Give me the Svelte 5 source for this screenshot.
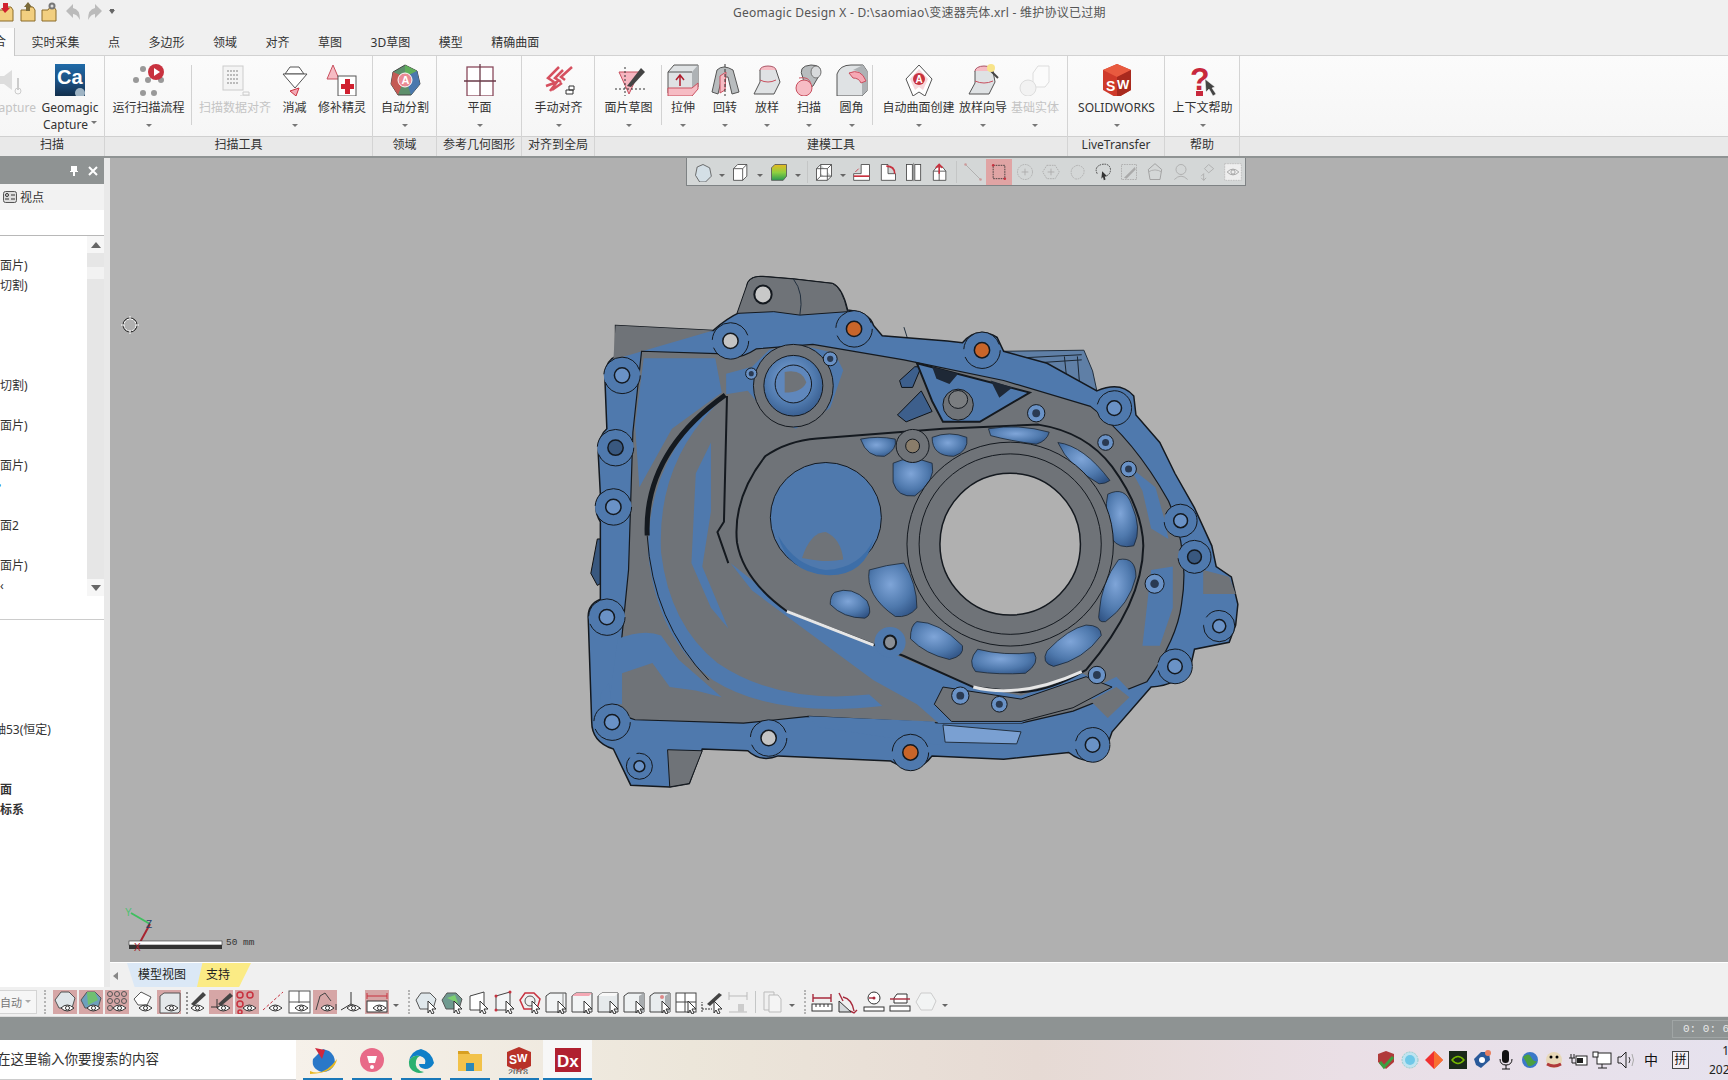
<script lang="ts">
  const eye = '<path d="M8 18q6-6 13 0q-7 6-13 0z" fill="#fff" stroke="#333"/><circle cx="14.500" cy="18" r="2" fill="none" stroke="#333"/>';
  const arrow = '<path d="M14 11l8 8h-4l2 4-2 1-2-4-2 3z" fill="#fff" stroke="#333"/>';

  const icons: Record<string, string> = {
    capOff: '<path d="M0 12h6l8-6v20l-8-6H0z" fill="#ddd"/><path d="M20 14v12" stroke="#ccc" stroke-width="2"/><circle cx="20" cy="27" r="3" fill="none" stroke="#ccc"/>',
    ca: '<defs><linearGradient id="cag" x1="0" y1="0" x2="0" y2="1"><stop offset="0" stop-color="#1f6aa8"/><stop offset=".6" stop-color="#1b4a78"/><stop offset="1" stop-color="#102a44"/></linearGradient></defs><rect x="1" y="0" width="30" height="34" fill="url(#cag)"/><text x="3" y="20" font-family="Liberation Sans" font-weight="700" font-size="20" fill="#fff">Ca</text><circle cx="26" cy="29" r="5" fill="#9fb4c4"/>',
    run: '<circle cx="10" cy="5" r="3" fill="#999"/><circle cx="3" cy="16" r="3" fill="#999"/><circle cx="15" cy="16" r="3" fill="#999"/><circle cx="28" cy="16" r="3" fill="#999"/><circle cx="10" cy="29" r="3" fill="#999"/><circle cx="21" cy="29" r="3" fill="#999"/><circle cx="23" cy="8" r="8" fill="#c8323f"/><path d="M21 4l6 4-6 4z" fill="#fff"/>',
    grid: '<rect x="4" y="2" width="20" height="24" fill="#f4f4f4" stroke="#ccc"/><path d="M8 7h12M8 11h12M8 15h12M8 19h12" stroke="#bbb" stroke-width="2" stroke-dasharray="2 1"/><path d="M21 32h10M24 28h6v3h-6z" fill="none" stroke="#ccc"/>',
    funnel: '<path d="M11 3h9l5 7H6z" fill="#fff" stroke="#555"/><path d="M4 10h24L16 24z" fill="#fff" stroke="#555"/><path d="M11 27l9-3-3 8z" fill="#f4a8b4" stroke="#c8323f"/>',
    repair: '<path d="M7 1l6 14H1z" fill="#f6bcc4" stroke="#c8505f"/><rect x="12" y="12" width="18" height="20" fill="#fff" stroke="#555"/><path d="M19 15h5v5h4v5h-4v5h-5v-5h-4v-5h4z" fill="#d0202f"/>',
    seg: '<path d="M16 1l12 6 3 13-9 11-13 0L2 20 4 8z" fill="#5d8f6b" stroke="#444"/><path d="M16 1l12 6-12 6z" fill="#5fae5a"/><path d="M4 8l12 5-7 18-7-11z" fill="#c45a54"/><path d="M28 7l3 13-9 11-6-18z" fill="#4a78ad"/><circle cx="16" cy="16" r="7" fill="#e98a94" stroke="#fff"/><text x="12.500" y="20" font-size="11" font-weight="700" font-family="Liberation Sans" fill="#fff">A</text>',
    plane: '<rect x="3" y="3" width="26" height="29" fill="#fff" stroke="#8a4a5c" stroke-width="1.300"/><path d="M16 0v34M0 17h32" stroke="#6a3a48" stroke-width="1.300"/>',
    malign: '<path d="M16 3l-11 11 6 4M20 6l-8 8 6 4M29 3L18 13l4 3M3 22l11-4-7 9M9 26l10-7" fill="none" stroke="#d6505f" stroke-width="2.500"/><path d="M23 26h7v4h-7zM26 22h5v4h-5z" fill="#fff" stroke="#333"/>',
    msketch: '<path d="M6 8h20L16 30z" fill="#f6b6c0" stroke="#c8505f"/><path d="M12 3v30M2 25h30" stroke="#333" stroke-dasharray="2 2"/><path d="M14 22L28 4l4 4-14 15z" fill="#444"/>',
    extrude: '<path d="M1 8l6-7h24v22l-6 6H1z" fill="#dfe2e4" stroke="#555"/><path d="M25 29V8l6-7v22z" fill="#aeb2b5"/><path d="M1 8h24" stroke="#555"/><path d="M1 24h24l6-5v6l-6 7H1z" fill="#f6bcc4" stroke="#c8505f"/><path d="M13 22V12m-4 4l4-5 4 5" fill="none" stroke="#b01c2c" stroke-width="1.500"/>',
    revolve: '<path d="M3 28L8 6q6-6 16 0l6 22-7 2-4-17h-6l-4 17z" fill="#b8bcbe" stroke="#555"/><path d="M11 12l6-4-1 18-5 3z" fill="#f6bcc4" stroke="#c8505f"/><path d="M16 0v32" stroke="#333" stroke-dasharray="3 2"/>',
    loft: '<ellipse cx="17" cy="6" rx="8" ry="4" fill="#f6bcc4" stroke="#a56"/><path d="M9 6v12L3 30h20l6-12-4-12" fill="#dfe2e4" stroke="#555"/><path d="M9 16q8 4 16 0" fill="none" stroke="#c8505f"/>',
    sweep: '<path d="M10 14q-6-12 8-13 12 0 9 9l-7 12-8 4z" fill="#b8bcbe" stroke="#555"/><ellipse cx="23" cy="8" rx="5" ry="6" fill="#d8dadc" stroke="#777"/><path d="M6 14q10-2 12 6" fill="none" stroke="#c8505f"/><ellipse cx="11" cy="24" rx="8" ry="8" fill="#f6bcc4" stroke="#c8505f"/>',
    fillet: '<path d="M1 10q3-9 14-9h12l4 6v20l-5 5H1z" fill="#dfe2e4" stroke="#555"/><path d="M26 32V14q0-7-9-8l10-5 4 6v20z" fill="#aeb2b5"/><path d="M13 9q12-5 17 8l-5 2q-2-5-8-5z" fill="#f6a8b4" stroke="#c8505f"/>',
    autosurf: '<path d="M16 1l13 14-7 17-6-4-6 4-7-17z" fill="#fff" stroke="#555"/><path d="M16 5l9 10-5 11-4-3-4 3-5-11z" fill="#f6d8dc"/><circle cx="16" cy="15" r="6" fill="#c8323f"/><text x="12.500" y="19" font-size="10" font-weight="700" font-family="Liberation Sans" fill="#fff">A</text>',
    loftw: '<ellipse cx="17" cy="7" rx="9" ry="5" fill="#f6bcc4" stroke="#a56"/><path d="M8 7v12L2 30h20l6-12-2-11" fill="#dfe2e4" stroke="#555"/><path d="M8 17q9 4 18 0" fill="none" stroke="#c8505f"/><path d="M23 6L31 14" stroke="#444" stroke-width="2"/><circle cx="24" cy="4" r="4" fill="#f8e48a"/>',
    solidOff: '<path d="M14 9l5-7h11v16l-4 5H14z" fill="#fbfbfb" stroke="#ddd"/><circle cx="9" cy="24" r="8" fill="#f2f2f2" stroke="#ddd"/>',
    sw: '<path d="M16 0l14 6v20l-14 8L2 26V6z" fill="#cf3a2a"/><path d="M16 0l14 6-14 7L2 6z" fill="#e85a3f"/><path d="M16 13v21l14-8V6z" fill="#a82a1e"/><text x="5" y="27" font-size="14" font-weight="700" font-family="Liberation Sans" fill="#fff">S</text><text x="16" y="25" font-size="13" font-weight="700" font-family="Liberation Sans" fill="#fff">W</text>',
    help: '<text x="3" y="26" font-size="32" font-weight="700" font-family="Liberation Sans" fill="#c8283c">?</text><rect x="9" y="27" width="7" height="6" fill="#c8283c"/><path d="M18 15l1 13 3-3 4 7 3-2-4-6 3-1z" fill="#444" stroke="#fff" stroke-width=".5"/>',

    hexo: '<path d="M12 3l8 4 2 10-7 7H8l-5-8 2-10z" fill="#d4dfe6" stroke="#555"/>',
    cube: '<path d="M3 8l5-5h11v14l-5 5H3z" fill="#fff" stroke="#444"/><path d="M3 8h11v14M14 8l5-5" fill="none" stroke="#444"/>',
    colorcube: '<defs><linearGradient id="ccg" x1="0" y1="0" x2="0" y2="1"><stop offset="0" stop-color="#e8b820"/><stop offset=".5" stop-color="#8fd040"/><stop offset="1" stop-color="#2a9a50"/></linearGradient></defs><path d="M3 7l4-4h14v14l-4 5H3z" fill="url(#ccg)" stroke="#555"/>',
    wire: '<path d="M3 8l5-5h13v14l-5 5H3zM3 8h13v14M16 8l5-5M8 3v14H21M8 17l-5 5" fill="#fff" stroke="#444"/>',
    secA: '<path d="M2 22V14h9V3h10v19z" fill="#fff" stroke="#444"/><path d="M2 17h19" stroke="#c8323f" stroke-width="2"/><path d="M4 12l4-4" stroke="#c8323f"/>',
    secB: '<path d="M4 22V3h8v11h9v8z" fill="#fff" stroke="#444"/><path d="M10 5q10 0 10 9" fill="none" stroke="#c8323f" stroke-width="2"/>',
    secC: '<rect x="3" y="3" width="7" height="19" fill="#fff" stroke="#444"/><rect x="13" y="3" width="7" height="19" fill="#fff" stroke="#444"/><path d="M11.500 1v22" stroke="#888"/>',
    secD: '<path d="M4 22V11h15v11zM4 11l4-5h7l4 5M11 11v11" fill="#fff" stroke="#444"/><path d="M11 14V3m-4 4l4-4 4 4" fill="none" stroke="#c8323f" stroke-width="2"/>',
    line: '<path d="M3 3l18 18" stroke="#aaa"/><circle cx="3" cy="3" r="1.500" fill="#c99"/><circle cx="21" cy="21" r="1.500" fill="#c99"/>',
    rectSel: '<rect x="5" y="4" width="14" height="16" fill="none" stroke="#333" stroke-dasharray="2 1"/><circle cx="5" cy="4" r="1.500" fill="#c8323f"/><circle cx="19" cy="20" r="1.500" fill="#c8323f"/>',
    circSel: '<circle cx="12" cy="12" r="9" fill="none" stroke="#aaa" stroke-dasharray="2 1"/><path d="M12 8v8M8 12h8" stroke="#aaa"/>',
    hexSel: '<path d="M7 4h10l5 8-5 8H7l-5-8z" fill="none" stroke="#aaa" stroke-dasharray="2 1"/><path d="M12 8v8M8 12h8" stroke="#aaa"/>',
    blobSel: '<path d="M6 8q6-6 10-3 6 2 4 9-4 8-11 6-6-5-3-12z" fill="none" stroke="#aaa" stroke-dasharray="2 1"/>',
    lasso: '<path d="M5 14Q1 6 10 3q10-2 11 6 0 7-7 8" fill="none" stroke="#333" stroke-dasharray="2 1"/><path d="M11 11l6 6h-3l1 4-2 1-1-4-2 2z" fill="#333"/>',
    brushSel: '<rect x="3" y="3" width="18" height="18" fill="none" stroke="#aaa" stroke-dasharray="2 1"/><path d="M6 19L19 6l1 3L9 20z" fill="#aaa"/>',
    faceSel: '<path d="M12 2l8 7-2 12H6L4 9z" fill="none" stroke="#999"/><path d="M4 12q8-5 16 0" fill="none" stroke="#aaa"/>',
    bodySel: '<circle cx="12" cy="9" r="6" fill="none" stroke="#aaa"/><path d="M4 21q8-8 16 0" fill="none" stroke="#aaa"/>',
    moveSel: '<path d="M14 3l6 5-6 5-5-5zM8 14v8m-3-3l3 3 3-3M8 14l-3 3" fill="none" stroke="#aaa"/>',
    eyeBox: '<rect x="2" y="2" width="20" height="20" fill="#eee" stroke="#bbb" stroke-dasharray="2 1"/><path d="M5 12q7-7 14 0q-7 7-14 0z" fill="none" stroke="#999"/><circle cx="12" cy="12" r="2.500" fill="none" stroke="#999"/>',

    eHex: '<path d="M8 2h8l6 6-3 10H6L2 10z" fill="#dfe6ea" stroke="#555"/>' + eye,
    eGreen: '<path d="M8 2h8l6 6-3 10H6L2 10z" fill="#6da0bc" stroke="#555"/><path d="M8 2h8l3 8-10 5z" fill="#70c070"/>' + eye,
    eDots: '<g fill="none" stroke="#555"><circle cx="5" cy="4" r="2.500"/><circle cx="12" cy="4" r="2.500"/><circle cx="19" cy="4" r="2.500"/><circle cx="5" cy="11" r="2.500"/><circle cx="12" cy="11" r="2.500"/><circle cx="19" cy="11" r="2.500"/><circle cx="5" cy="18" r="2.500"/></g>' + eye,
    eOut: '<path d="M10 2l10 5-4 8H7L3 9z" fill="#fff" stroke="#555"/>' + eye,
    eBox: '<path d="M3 6l4-3h16v18l-2 2H3z" fill="#e4e8ea" stroke="#555"/>' + eye,
    eBrush: '<path d="M4 2v22" stroke="#333" stroke-dasharray="2 2"/><path d="M8 14L20 2l3 3-12 11z" fill="#444"/>' + eye,
    eBrush2: '<path d="M2 17h8M8 9v9" stroke="#333"/><path d="M9 14L21 3l3 3-12 10z" fill="#444"/>' + eye,
    eRed: '<g fill="none" stroke="#c8323f" stroke-width="1.500"><circle cx="5" cy="5" r="3"/><circle cx="15" cy="5" r="3"/><circle cx="5" cy="14" r="3"/><circle cx="5" cy="22" r="2"/></g>' + eye,
    eSlash: '<path d="M2 20L22 2" stroke="#c8323f" stroke-dasharray="3 2"/>' + eye,
    eQuad: '<rect x="2" y="1" width="21" height="22" fill="#fff" stroke="#555"/><path d="M12 1v12M2 12h21" stroke="#555"/>' + eye,
    eCurve: '<path d="M3 20L7 6l5-3 6 8M23 14v6" fill="none" stroke="#444"/>' + eye,
    eAxis: '<path d="M12 2v12M2 20l10-6 10 5" fill="none" stroke="#333"/>' + eye,
    eDim: '<path d="M2 3v6M22 3v6M2 6h20" stroke="#c8323f"/><rect x="2" y="11" width="20" height="11" fill="#fff" stroke="#333"/>' + eye,
    aHex: '<path d="M7 3h9l6 6-3 10H6L2 10z" fill="#e0e8ec" stroke="#555"/>' + arrow,
    aGreen: '<path d="M7 3h9l6 6-3 10H6L2 10z" fill="#6f9a90" stroke="#555"/><path d="M7 8l8-3 3 8z" fill="#7cd070"/>' + arrow,
    aPlane: '<path d="M4 6l14-4v18H4z" fill="#fff" stroke="#444"/>' + arrow,
    aPlaneR: '<path d="M4 6l14-4v18H4z" fill="#f4f6f7" stroke="#444"/><g fill="#c8323f"><circle cx="4" cy="20" r="1.500"/><circle cx="18" cy="2" r="1.500"/><circle cx="4" cy="6" r="1.500"/></g>' + arrow,
    aRing: '<path d="M7 3h9l6 6-3 10H6L2 10z" fill="none" stroke="#c8323f" stroke-width="1.500"/><circle cx="12" cy="11" r="5" fill="none" stroke="#555"/>' + arrow,
    aBox: '<path d="M2 6l4-3h16v19H2z" fill="#f2f4f5" stroke="#444"/><path d="M19 22V3" stroke="#888"/>' + arrow,
    aBoxT: '<path d="M2 6l4-3h16v19H2z" fill="#f2f4f5" stroke="#444"/><path d="M2 6l4-3h16l-3 3z" fill="#f4a8b4"/>' + arrow,
    aBoxF: '<path d="M2 6l4-3h16v19H2z" fill="#e6eaec" stroke="#444"/><path d="M2 6l4-3h16l-3 3z" fill="#f8f8f8"/>' + arrow,
    aBoxG: '<path d="M2 6l4-3h16v19H2z" fill="#eef1f2" stroke="#444"/><path d="M17 6l5-3v19l-5 0z" fill="#a8acaf"/>' + arrow,
    aBoxC: '<path d="M2 6l4-3h16v19H2z" fill="#e8ecee" stroke="#444"/><path d="M17 6l5-3v19l-5 0z" fill="#a8acaf"/><circle cx="14" cy="7" r="2" fill="#d88"/>' + arrow,
    aQuad: '<rect x="2" y="3" width="20" height="19" fill="#fff" stroke="#444"/><path d="M11 3v19M2 12h20" stroke="#444"/>' + arrow,
    aBrush: '<path d="M2 22V12M2 19h10" stroke="#333" stroke-dasharray="2 1"/><path d="M7 14L19 3l3 2-12 11z" fill="#444"/>' + arrow,
    aDimOff: '<path d="M3 2v8M21 2v8M3 6h18M3 22h18" stroke="#bbb"/><path d="M12 22v-8h6v8z" fill="#ccc"/>',
    copyOff: '<path d="M3 2h10v18H3z" fill="none" stroke="#bbb"/><path d="M8 5h9l3 4v13H8z" fill="#f4f4f4" stroke="#bbb"/>',
    mDist: '<path d="M3 4v8M21 4v8M3 8h18" stroke="#a82a3c" stroke-width="1.400"/><rect x="2" y="14" width="20" height="7" fill="#fff" stroke="#333"/><path d="M6 14v3M10 14v3M14 14v3M18 14v3" stroke="#333"/>',
    mAngle: '<path d="M3 3l4 8M7 7q9 2 11 14M14 21l4 2 3-3" fill="none" stroke="#a82a3c" stroke-width="1.400"/><path d="M3 22V11l12 11z" fill="#d4d8da" stroke="#333"/>',
    mRadius: '<circle cx="12" cy="8" r="6" fill="#fff" stroke="#333"/><path d="M7 8h5" stroke="#a82a3c" stroke-width="1.400"/><circle cx="12" cy="8" r="1.500" fill="#a82a3c"/><rect x="2" y="17" width="20" height="4" fill="#fff" stroke="#333"/>',
    mVol: '<path d="M6 8l3-4h10v9H6z" fill="#fff" stroke="#333"/><path d="M2 9h20" stroke="#a82a3c" stroke-width="1.400"/><rect x="2" y="16" width="20" height="5" fill="#fff" stroke="#333"/>',
    hexOff: '<path d="M7 3h10l5 8-4 9H7l-5-8z" fill="#f2f4f4" stroke="#ccc"/>',
    folderR: '<path d="M1 8h6l2-3h4l2 3v11H1z" fill="#f2cf80" stroke="#8a6a28"/><path d="M5 1h5v5h2l-5 5-4-5h2z" fill="#d0202f"/>',
    folderG: '<path d="M1 8h6l2-3h4l2 3v11H1z" fill="#f2cf80" stroke="#8a6a28"/><path d="M8 0l4 5h-2v4H6V5H4z" fill="#7a6a3a"/>',
    folderS: '<path d="M1 8h6l2-3h4l2 3v11H1z" fill="#f2cf80" stroke="#8a6a28"/><circle cx="11" cy="4" r="3.500" fill="#777"/><circle cx="11" cy="4" r="1.500" fill="#ddd"/>',
    undo: '<path d="M3 9l7-7v4q7 1 7 12-3-6-7-6v4z" fill="#bbb"/>',
    redo: '<path d="M17 9l-7-7v4q-7 1-7 12 3-6 7-6v4z" fill="#bbb"/>',

    tSw: '<path d="M10 1l8 3v8l-8 7-8-7V4z" fill="#b03a3a"/><path d="M4 12l4 5 9-10" fill="none" stroke="#3aa040" stroke-width="3"/>',
    tCyan: '<circle cx="10" cy="10" r="8" fill="#bfe4f0" stroke="#9cc" stroke-dasharray="2 1"/><circle cx="10" cy="10" r="5" fill="#6fc8e8"/>',
    tDiamond: '<path d="M10 1l9 9-9 9-9-9z" fill="#f03030"/><path d="M10 1l9 9-9 9z" fill="#f87030"/>',
    tNv: '<rect x="1" y="1" width="18" height="18" fill="#1a2a1a"/><path d="M4 10q6-7 12 0q-6 7-12 0z" fill="none" stroke="#76b900" stroke-width="1.500"/>',
    tCloud: '<path d="M2 9l7-7h8l1 8-9 8-5-3z" fill="#2a5a9a"/><circle cx="10" cy="10" r="3" fill="#fff"/><circle cx="16" cy="3" r="3" fill="#e88060"/>',
    tMic: '<rect x="6" y="0" width="7" height="13" rx="3.500" fill="#111"/><path d="M4 9q0 6 6 6t6-6M10 15v4M6 19h8" fill="none" stroke="#111"/>',
    tGlobe: '<circle cx="10" cy="10" r="8" fill="#3a78c8"/><path d="M3 7q6-5 8 0t6 4q-4 6-9 5-2-5-5-9z" fill="#4aa040"/>',
    tFace: '<circle cx="10" cy="10" r="8" fill="#e8d8b8"/><path d="M3 14q7 4 14 0" stroke="#b03a3a" stroke-width="3" fill="none"/><circle cx="7" cy="7" r="1.500"/><circle cx="13" cy="7" r="1.500"/>',
    tPower: '<rect x="8" y="6" width="11" height="9" fill="#fff" stroke="#222"/><rect x="9" y="8" width="6" height="5" fill="#222"/><path d="M1 8h6M3 4v4M6 4v4M4 8v5h4" stroke="#222" fill="none"/>',
    tNet: '<rect x="5" y="3" width="14" height="11" fill="#fff" stroke="#222"/><rect x="1" y="2" width="5" height="5" fill="#fff" stroke="#222"/><path d="M10 14v4M6 18h9" stroke="#222"/>',
    tVol: '<path d="M2 7h3l5-5v16l-5-5H2z" fill="none" stroke="#222"/><path d="M13 7q2 3 0 6" stroke="#444" fill="none"/><path d="M16 4q3 6 0 12" stroke="#aaa" fill="none"/>',

    appMaps: '<path d="M14 3L4 13q-2 10 9 13 10 0 13-9 0-8-6-12z" fill="#2a78c8"/><path d="M6 2l10 2-3 9z" fill="#d0283c"/><path d="M1 25q14 6 27-12-2 14-27 15z" fill="#e8b820"/>',
    appPig: '<circle cx="14" cy="14" r="12" fill="#e86a88"/><path d="M9 10l10 0-2 7h-6z" fill="#fff"/><circle cx="14" cy="21" r="2" fill="#fff"/>',
    appEdge: '<path d="M27 17Q25 6 14 3 4 5 2 15q3-6 11-5 7 2 5 8h-6q0 4 6 5 6 0 9-6z" fill="#0f7fc8"/><path d="M2 15q-1 10 10 12 3 0 5-1-10-2-8-11 1-4 4-5-8-1-11 5z" fill="#2ab070"/>',
    appFolder: '<path d="M2 5h10l2 3h12v17H2z" fill="#f2c24a"/><path d="M2 5h10l2 3H2z" fill="#d8a020"/><path d="M10 17h8v8h-8z" fill="#2a88b8"/>',
    appSw: '<path d="M14 1l12 5v14l-12 6L2 20V6z" fill="#b83228"/><text x="4" y="18" font-size="12" font-weight="700" font-family="Liberation Sans" fill="#fff">S</text><text x="12" y="16" font-size="11" font-weight="700" font-family="Liberation Sans" fill="#fff">W</text><text x="3" y="29" font-size="9" font-weight="700" font-family="Liberation Sans" fill="#222" stroke="#fff" stroke-width=".3">2018</text>',
    appDx: '<rect x="1" y="2" width="26" height="24" fill="#b02030"/><text x="3" y="21" font-size="17" font-weight="700" font-family="Liberation Sans" fill="#fff">Dx</text>'
  };

  const ribbon = [
    { name: '扫描', w: 105, items: [
      { w: 43, ml: -8, icon: 'capOff', label: 'Capture', off: true },
      { w: 70, icon: 'ca', label: 'Geomagic', label2: 'Capture' } ] },
    { name: '扫描工具', w: 268, items: [
      { w: 87, icon: 'run', label: '运行扫描流程', caret: true, sep: true },
      { w: 86, icon: 'grid', label: '扫描数据对齐', off: true },
      { w: 33, icon: 'funnel', label: '消减', caret: true },
      { w: 62, icon: 'repair', label: '修补精灵' } ] },
    { name: '领域', w: 64, items: [{ w: 64, icon: 'seg', label: '自动分割', caret: true }] },
    { name: '参考几何图形', w: 85, items: [{ w: 85, icon: 'plane', label: '平面', caret: true }] },
    { name: '对齐到全局', w: 73, items: [{ w: 73, icon: 'malign', label: '手动对齐', caret: true }] },
    { name: '建模工具', w: 473, items: [
      { w: 67, icon: 'msketch', label: '面片草图', caret: true, sep: true },
      { w: 42, icon: 'extrude', label: '拉伸', caret: true },
      { w: 42, icon: 'revolve', label: '回转', caret: true },
      { w: 42, icon: 'loft', label: '放样', caret: true },
      { w: 42, icon: 'sweep', label: '扫描', caret: true },
      { w: 43, icon: 'fillet', label: '圆角', caret: true, sep: true },
      { w: 91, icon: 'autosurf', label: '自动曲面创建', caret: true },
      { w: 38, icon: 'loftw', label: '放样向导', caret: true },
      { w: 66, icon: 'solidOff', label: '基础实体', caret: true, off: true } ] },
    { name: 'LiveTransfer', w: 97, items: [{ w: 97, icon: 'sw', label: 'SOLIDWORKS', caret: true }] },
    { name: '帮助', w: 75, items: [{ w: 75, icon: 'help', label: '上下文帮助', caret: true }] }
  ];

  const tabs = ['实时采集', '点', '多边形', '领域', '对齐', '草图', '3D草图', '模型', '精确曲面'];
  const viewTools = [
    'hexo', '^', 'cube', '^', 'colorcube', '^', '|', 'wire', '^', 'secA', 'secB', 'secC', 'secD', '|',
    'line', '!rectSel', 'circSel', 'hexSel', 'blobSel', 'lasso', 'brushSel', 'faceSel', 'bodySel', 'moveSel', 'eyeBox'
  ];
  const bottomTools = [
    '!eHex', '!eGreen', '!eDots', 'eOut', '!eBox', 'eBrush', '!eBrush2', '!eRed', 'eSlash', 'eQuad', '!eCurve', 'eAxis', '!eDim', '^', ':',
    'aHex', 'aGreen', 'aPlane', 'aPlaneR', 'aRing', 'aBox', 'aBoxT', 'aBoxF', 'aBoxG', 'aBoxC', 'aQuad', 'aBrush', 'aDimOff', '|', 'copyOff', '^', ':',
    'mDist', 'mAngle', 'mRadius', 'mVol', 'hexOff', '^'
  ];
  const tree = ['', '面片)', '切割)', '', '', '', '', '切割)', '', '面片)', '', '面片)', '•', '', '面2', '', '面片)', '‹'];
  const props = [
    { t: '' }, { t: '' }, { t: '' }, { t: '' }, { t: '' }, { t: '轴53(恒定)' }, { t: '' }, { t: '' },
    { t: '面', bold: true }, { t: '标系', bold: true }
  ];
  const apps = ['appMaps', 'appPig', 'appEdge', 'appFolder', 'appSw', 'appDx'];
  const tray = ['tSw', 'tCyan', 'tDiamond', 'tNv', 'tCloud', 'tMic', 'tGlobe', 'tFace', 'tPower', 'tNet', 'tVol'];

  // part drawing, coords are in a 1568 square squeezed to 680x540 so circles get ry = r * K
  const K = 1.26;
  const bolts = [
    { x: 370, y: 235, r: 42, h: 'through' }, { x: 655, y: 200, r: 42, h: 'orange' }, { x: 950, y: 262, r: 42, h: 'orange' },
    { x: 1255, y: 430, r: 40, h: 'blue' }, { x: 1408, y: 757, r: 38, h: 'blue' }, { x: 1440, y: 862, r: 38, h: 'dark' },
    { x: 1497, y: 1063, r: 36, h: 'blue' }, { x: 1395, y: 1180, r: 40, h: 'blue' }, { x: 1205, y: 1408, r: 40, h: 'blue' },
    { x: 785, y: 1430, r: 42, h: 'orange' }, { x: 458, y: 1388, r: 42, h: 'through' }, { x: 97, y: 1342, r: 42, h: 'blue' },
    { x: 85, y: 1037, r: 42, h: 'blue' }, { x: 100, y: 717, r: 42, h: 'blue' }, { x: 105, y: 545, r: 42, h: 'dark' },
    { x: 120, y: 335, r: 42, h: 'blue' }, { x: 160, y: 1470, r: 30, h: 'blue' }
  ];
  const smallHoles = [
    { x: 1348, y: 940, r: 22 }, { x: 1288, y: 607, r: 18 }, { x: 1215, y: 1205, r: 20 }, { x: 900, y: 1265, r: 20 },
    { x: 990, y: 1290, r: 18 }, { x: 1075, y: 445, r: 20 }, { x: 1235, y: 530, r: 18 }, { x: 600, y: 287, r: 16 }, { x: 418, y: 330, r: 13 }
  ];
  const pods = [
    'M670 520q40-10 80 0 5 30-25 50-40 5-55-50z',
    'M835 515q40-20 80 0 5 40-30 55-50 0-50-55z',
    'M965 490q70-15 140 10-5 25-30 35-60-10-105-25z',
    'M1125 530q60 10 120 110-10 10-25 10-70-50-95-120z',
    'M1240 680q40-25 55 30 25 70 5 120-35 10-50-20-20-80-10-130z',
    'M1265 870q40-10 40 50-15 80-70 130-20 5-15-25 5-90 45-155z',
    'M1190 1060q35 0 35 30-40 70-110 90-30-10-15-45 50-65 90-75z',
    'M940 1130q60 20 130 10 15 30-20 60-60 5-115-5-20-30 5-65z',
    'M800 1050q50 0 105 70 5 30-30 40-55-15-90-60 0-40 15-50z',
    'M610 965q40-20 75 25 15 40-5 50-50 0-80-40 0-25 10-35z',
    'M690 900q40-15 80-20 30 60 30 130-20 30-50 25-70-60-60-135z',
    'M745 590q40-25 90 0 10 50-40 95-40 5-50-40z'
  ];
</script>

{#snippet ic(name: string, size: number, vb: number)}
  <svg width={size} height={size} viewBox="0 0 {vb} {vb}">{@html icons[name]}</svg>
{/snippet}

{#snippet toolRow(list: string[], size: number)}
  {#each list as t}
    {#if t === '^'}
      <span class="tcaret"></span>
    {:else if t === '|'}
      <span class="tsep"></span>
    {:else if t === ':'}
      <span class="tdots"></span>
    {:else}
      <span class="tool" class:on={t[0] === '!'}>{@render ic(t.replace('!', ''), size, 24)}</span>
    {/if}
  {/each}
{/snippet}

<div class="app">
  <header class="titlebar">
    <div class="qat">
      {#each ['folderR', 'folderG', 'folderS', 'undo', 'redo'] as q}
        <span class="qbtn">{@render ic(q, 20, 20)}</span>
      {/each}
      <span class="qcaret"></span>
    </div>
    <div class="title">Geomagic Design X - D:\saomiao\变速器壳体.xrl - 维护协议已过期</div>
  </header>

  <nav class="tabs">
    <span class="tab-active"><em>合</em></span>
    {#each tabs as t}<span>{t}</span>{/each}
  </nav>

  <section class="ribbon">
    {#each ribbon as g}
      <div class="group" style:width="{g.w}px">
        <div class="group-body">
          {#each g.items as b}
            <div class="rbtn" class:off={b.off} class:sep={b.sep} style:width="{b.w}px" style:margin-left={b.ml ? b.ml + 'px' : null}>
              <div class="ricon">{@render ic(b.icon, 32, 32)}</div>
              <div class="rlabel">{b.label}</div>
              {#if b.label2}
                <div class="rlabel second">{b.label2} <i class="caret"></i></div>
              {:else if b.caret}
                <i class="caret low"></i>
              {/if}
            </div>
          {/each}
        </div>
        <div class="group-name">{g.name}</div>
      </div>
    {/each}
    <div class="group rest">
      <div class="group-body"></div>
      <div class="group-name"></div>
    </div>
  </section>

  <div class="workspace">
    <aside class="panel">
      <div class="panel-head">
        <svg width="12" height="12" viewBox="0 0 12 12"><path d="M3 1h6v5h1v1H7v4H5V7H2V6h1z" fill="#fff"/></svg>
        <svg width="12" height="12" viewBox="0 0 12 12"><path d="M2 2l8 8M10 2l-8 8" stroke="#fff" stroke-width="2"/></svg>
      </div>
      <div class="panel-tabs">
        <svg width="14" height="12" viewBox="0 0 14 12"><rect x=".5" y=".5" width="13" height="11" rx="2" fill="#ddd" stroke="#555"/><circle cx="4" cy="4" r="1.500" fill="none" stroke="#333"/><path d="M8 4h4M8 8h4M2 8h4" stroke="#333"/></svg>
        <span>视点</span>
      </div>
      <div class="panel-input"></div>
      <div class="tree">
        <ul>
          {#each tree as row}
            <li class:dot={row === '•'}>{row}</li>
          {/each}
        </ul>
        <div class="scroll">
          <span class="sbtn"><i class="up"></i></span>
          <span class="thumb"></span>
          <span class="sbtn end"><i class="down"></i></span>
        </div>
      </div>
      <ul class="props">
        {#each props as p}
          <li class:bold={p.bold}>{p.t}</li>
        {/each}
      </ul>
    </aside>
    <div class="splitter"></div>
    <main class="main">
      <div class="viewport">
        <div class="viewbar">{@render toolRow(viewTools, 20)}</div>

        <svg class="cursor" width="20" height="20" viewBox="0 0 20 20">
          <circle cx="10" cy="10" r="7" fill="none" stroke="#111"/>
          <circle cx="10" cy="10" r="6" fill="none" stroke="#fff" stroke-dasharray="3 1"/>
          <path d="M10 1v3M10 16v3M1 10h3M16 10h3" stroke="#fff"/>
        </svg>

        <svg class="part" width="680" height="540" viewBox="0 0 1568 1568" preserveAspectRatio="none">
          <defs>
            <radialGradient id="podfill" cx=".45" cy=".4" r=".7">
              <stop offset="0" stop-color="#7fa5d8"/>
              <stop offset=".6" stop-color="#4f79ad"/>
              <stop offset="1" stop-color="#2f5283"/>
            </radialGradient>
          </defs>
          <!-- back ribs behind the top right edge -->
          <path d="M770 195l10 40M1000 265l185-3 20 60 12 70-120-40-95-60z" fill="#5f7fa6" stroke="#22303f"/>
          <path d="M1030 285l150-10M1060 300l120-10M1140 280l5 60M1170 280l5 80" fill="none" stroke="#1c2733"/>
          <path d="M48 910l15-100 20 0v120l-20 15z" fill="#39587f" stroke="#111"/>

          <!-- casting outline -->
          <path class="blue" d="M105 190L330 205Q360 170 395 150L410 65Q420 45 445 48L515 55 605 68Q628 80 640 145 690 150 700 190L720 220 870 235 905 240Q940 190 985 225L1000 265 1100 300 1215 380Q1270 350 1300 395L1305 450 1360 530 1395 620 1440 720 1480 830 1490 890 1525 920 1540 1000 1535 1060 1520 1110 1440 1130 1430 1185Q1400 1235 1340 1240L1250 1370 1230 1440Q1190 1470 1150 1430L1000 1450 835 1440Q800 1500 740 1455L480 1440Q440 1460 410 1425L305 1420 275 1520 230 1530 140 1525 100 1420Q50 1400 50 1340L42 1040Q40 1000 70 985L70 760Q50 720 70 680L65 560Q65 510 85 490L80 330Q85 290 105 280z"/>

          <!-- gray top and bottom lugs -->
          <path class="gray" d="M385 155L410 65Q420 45 445 48L515 55 605 68Q628 80 640 150L530 160 470 150z"/>
          <path d="M515 55q25 40 15 105" fill="none" stroke="#22303f"/>
          <ellipse cx="445" cy="100" rx="20" ry="26" fill="#c8c8c8" stroke="#14191f" stroke-width="2"/>
          <path class="gray" d="M225 1422L305 1425 275 1520 230 1530z"/>
          <path d="M105 190L330 205 180 260 100 290z" fill="#6f7378"/>
          <path d="M1460 900l60 20 15 50-75 0z" fill="#6f7378"/>

          <!-- pocket inside the gasket flange -->
          <path class="inner" d="M165 265L340 272Q380 300 430 258L560 245 770 290 1000 350 1200 425Q1300 520 1380 700 1430 850 1410 1000 1400 1100 1330 1225L1160 1310 1040 1345 860 1345 790 1340 550 1325 400 1345 150 1335Q110 1320 105 1280L135 900 145 500z"/>

          <!-- blue patches on the pocket floor -->
          <path class="patch" d="M170 285L335 285 350 385 235 490 160 660 150 480z"/>
          <path class="patch" d="M290 620l35-90 0 200-20 160 60 180-40-60-45-130z"/>
          <path class="patch" d="M110 1100q60-30 100-10l40 70 100 110-60-20-60-10-40-70-70 30 0 90-30 0z"/>
          <path class="patch" d="M70 1260l20-30 10 100-30 30z"/>
          <path class="patch" d="M1290 600l60 60 20 90 10 60-40-30-20-110zM1340 900l50-10 0 120-30 110-40 0 10-110zM1180 1260l80-50 30 40-60 40zM880 1280l60 20 30 40-100 0z"/>

          <!-- crescent wall on the left -->
          <path class="patch" d="M180 850Q200 1100 330 1220 470 1330 720 1295L690 1262Q480 1290 340 1170 230 1060 210 850 200 600 330 430L350 400Q180 560 180 850z"/>
          <path d="M358 392Q170 560 178 800" fill="none" stroke="#14191f" stroke-width="5"/>
          <path d="M178 800Q190 1050 320 1220" fill="none" stroke="#14191f" stroke-width="1"/>
          <path d="M362 395L355 760 340 790 365 880" fill="none" stroke="#14191f" stroke-width="2"/>

          <!-- diagonal rib under the housing -->
          <path class="patch" d="M370 880L510 1020 700 1120 930 1240 1040 1265 1180 1200 1230 1230 1040 1345 850 1345 800 1290 700 1220 560 1090 420 960z"/>
          <path class="gray" d="M860 1240L1040 1275 1190 1210 1250 1240 1160 1300 1040 1340 880 1340 840 1290z"/>
          <path class="patch" d="M550 1325l290 15 20 50 0 20-110-20-180-35z"/>
          <path d="M860 1350L1040 1370 1030 1405 865 1400z" fill="#7aa0d2" stroke="#22303f"/>
          <path d="M1200 1280l60-40 30 30-50 60z" fill="#6f7378"/>

          <!-- upper boss -->
          <path class="patch" d="M360 330L420 310 460 260 540 250 610 270 630 320 600 430 520 490 450 440 410 380 360 390z"/>
          <ellipse class="gray" cx="515" cy="365" rx="92" ry="120"/>
          <ellipse cx="515" cy="365" rx="68" ry="88" fill="url(#podfill)" stroke="#14191f"/>
          <ellipse cx="515" cy="360" rx="42" ry="55" fill="#5f87bc" stroke="#14191f"/>
          <path d="M495 325q40-10 50 30-10 30-50 30z" fill="#6f7378"/>

          <!-- gusset and post at top -->
          <path d="M760 350l35-40 15 0-20 60-25 0zM755 450l55-70 25 60-60 30z" fill="#3d5f8c" stroke="#0e1319"/>
          <path d="M800 300L1060 385 945 470 860 470 835 410z" fill="#4f79ad" stroke="#14191f" stroke-width="2"/>
          <path d="M835 310l60 20-20 30-30-15zM970 350l50 20-30 30z" fill="#1e2836"/>
          <ellipse class="gray" cx="895" cy="420" rx="35" ry="45"/>
          <ellipse cx="895" cy="405" rx="22" ry="26" fill="#7a7d80" stroke="#14191f"/>

          <!-- housing pocket -->
          <path class="housing" d="M570 518L860 490 1080 478Q1190 500 1250 600 1320 720 1322 830 1320 1000 1190 1190 1110 1250 1040 1255L930 1240 770 1150 500 1020Q400 930 385 820 375 690 450 570 500 525 570 518z"/>
          <path d="M500 1020L700 1118M930 1240Q1040 1275 1180 1195" fill="none" stroke="#e6e6e6" stroke-width="3"/>
          {#each pods as d}
            <path class="pod" fill="url(#podfill)" {d}/>
          {/each}

          <!-- blind hole -->
          <ellipse cx="590" cy="748" rx="128" ry="160" fill="#4f79ad" stroke="#14191f"/>
          <path d="M535 865Q555 790 590 790 625 810 630 870 590 880 535 865z" fill="#6f7378"/>
          <path d="M480 800q40 90 110 100 80-5 110-90-20 110-110 105-90-10-110-115z" fill="#3d6ea8"/>

          <!-- main bore -->
          <ellipse class="gray" cx="1015" cy="825" rx="238" ry="296"/>
          <ellipse class="gray" cx="1015" cy="825" rx="210" ry="262"/>
          <ellipse cx="1015" cy="825" rx="162" ry="206" fill="#b0b0b0" stroke="#14191f" stroke-width="1.500"/>

          <!-- inner bosses -->
          <ellipse class="gray" cx="790" cy="540" rx="38" ry="48"/>
          <ellipse cx="790" cy="540" rx="16" ry="20" fill="#8a7d6a" stroke="#14191f"/>
          <ellipse class="patch" cx="738" cy="1110" rx="36" ry="44"/>
          <ellipse cx="738" cy="1110" rx="14" ry="20" fill="#8a8f96" stroke="#14191f" stroke-width="2"/>

          {#each smallHoles as h}
            <ellipse cx={h.x} cy={h.y} rx={h.r} ry={h.r * K} fill="#6a92c6" stroke="#14191f"/>
            <ellipse cx={h.x} cy={h.y} rx={h.r * .45} ry={h.r * .45 * K} fill="#2a3a52"/>
          {/each}

          {#each bolts as b}
            <ellipse cx={b.x} cy={b.y} rx={b.r} ry={b.r * K} fill="#4f79ad" stroke="#14191f" stroke-dasharray="50 8"/>
            <ellipse cx={b.x} cy={b.y} rx={b.r * .42} ry={b.r * .42 * K}
              fill={b.h === 'orange' ? '#c8652a' : b.h === 'through' ? '#c4c4c4' : b.h === 'dark' ? '#39587f' : '#6a92c6'} stroke="#14191f" stroke-width="1.500"/>
          {/each}
        </svg>

        <div class="triad">
          <svg width="170" height="50" viewBox="0 0 170 50">
            <path d="M21 6L40 17" stroke="#3fbf5f" stroke-width="2"/>
            <path d="M40 17L28 39" stroke="#a82430" stroke-width="2"/>
            <rect x="19" y="34" width="93" height="4" fill="#fff" stroke="#333" stroke-width=".6"/>
            <rect x="19" y="38" width="93" height="4" fill="#333"/>
            <text class="ax" x="15" y="9" fill="#4fc070">Y</text>
            <text class="ax" x="36" y="21" fill="#25406a">Z</text>
            <text class="ax" x="24" y="44" fill="#a82430">X</text>
            <text class="scale" x="116" y="38" fill="#333">50 mm</text>
          </svg>
        </div>
      </div>
      <div class="viewtabs">
        <i class="backarrow"></i>
        <span class="vt blue-tab">模型视图</span>
        <span class="vt yellow-tab">支持</span>
      </div>
    </main>
  </div>

  <div class="bottombar">
    <div class="combo"><span>自动</span><i></i></div>
    <span class="tdots"></span>
    {@render toolRow(bottomTools, 24)}
  </div>

  <div class="status"><span class="clock-box">0: 0: 6.</span></div>

  <footer class="taskbar">
    <div class="search">在这里输入你要搜索的内容</div>
    <div class="apps">
      {#each apps as a}
        <span class="app-btn" class:white={a === 'appDx'}>{@render ic(a, 28, 28)}</span>
      {/each}
    </div>
    <div class="tray">
      {#each tray as t}
        <span class="tray-i">{@render ic(t, 20, 20)}</span>
      {/each}
      <span class="ime">中</span>
      <span class="ime box">拼</span>
      <div class="clock"><span>18:20</span><span>2021/3/16</span></div>
    </div>
  </footer>
</div>

<style>
  :global(body) {
    margin: 0;
    background: #f0f0f0;
  }

  .app {
    width: 1728px;
    height: 1080px;
    overflow: hidden;
    display: flex;
    flex-direction: column;
    font-family: "Noto Sans", "Noto Sans CJK SC", sans-serif;
    font-size: 12px;
    color: #333;
  }

  svg { display: block; }

  /* ---- title ---- */
  .titlebar {
    height: 28px;
    flex: none;
    display: flex;
    align-items: center;
    padding-bottom: 4px;
    box-sizing: border-box;
    background: #f0f0f0;
  }
  .qat {
    width: 118px;
    display: flex;
    align-items: center;
    margin-left: -3px;
  }
  .qbtn { width: 22px; display: flex; justify-content: center; }
  .qcaret {
    width: 0;
    height: 0;
    margin-left: 3px;
    border: 3px solid transparent;
    border-top: 4px solid #666;
    border-bottom: 0;
    box-shadow: 0 -2px 0 -1px #666;
  }
  .title {
    margin-left: 618px;
    color: #555;
    white-space: nowrap;
    letter-spacing: .25px;
  }

  .tabs {
    height: 28px;
    flex: none;
    display: flex;
    align-items: center;
    gap: 28.500px;
    background: #f0f0f0;
    border-bottom: 1px solid #d2d2d2;
    box-sizing: border-box;
  }
  .tab-active {
    width: 15px;
    height: 28px;
    margin-right: -12px;
    background: #fbfbfb;
    border-right: 1px solid #c8c8c8;
    box-sizing: border-box;
    overflow: hidden;
    line-height: 28px;
  }
  .tab-active em { font-style: normal; margin-left: -6px; }

  /* ---- ribbon ---- */
  .ribbon {
    height: 102px;
    flex: none;
    display: flex;
    border-bottom: 2px solid #8f9393;
    box-sizing: border-box;
    background: #e9e9e9;
  }
  .group {
    flex: none;
    display: flex;
    flex-direction: column;
    border-right: 1px solid #d4d4d4;
    box-sizing: border-box;
    overflow: hidden;
  }
  .group.rest { flex: 1; border: 0; }
  .group-body {
    height: 81px;
    flex: none;
    display: flex;
    background: linear-gradient(#fbfbfb, #f6f6f6);
    border-bottom: 1px solid #d0d0d0;
    box-sizing: border-box;
  }
  .group-name {
    flex: 1;
    text-align: center;
    line-height: 16px;
  }
  .rbtn {
    flex: none;
    display: flex;
    flex-direction: column;
    align-items: center;
    padding-top: 8px;
    box-sizing: border-box;
    position: relative;
    white-space: nowrap;
  }
  .rbtn.sep::after {
    content: "";
    position: absolute;
    right: 0;
    top: 9px;
    height: 60px;
    width: 1px;
    background: #d2d2d2;
  }
  .ricon { height: 34px; }
  .rlabel { margin-top: 1px; line-height: 18px; }
  .rlabel.second { margin-top: -1px; }
  .rbtn.off .rlabel { color: #c4c4c4; }
  .caret {
    display: inline-block;
    width: 0;
    height: 0;
    border: 3px solid transparent;
    border-top: 3px solid #777;
    border-bottom: 0;
    vertical-align: 5px;
  }
  .caret.low { margin-top: 7px; }

  /* ---- panel ---- */
  .workspace {
    flex: 1;
    display: flex;
    min-height: 0;
  }
  .panel {
    width: 104px;
    flex: none;
    display: flex;
    flex-direction: column;
    background: #fff;
    overflow: hidden;
  }
  .panel-head {
    height: 26px;
    flex: none;
    display: flex;
    align-items: center;
    justify-content: flex-end;
    gap: 7px;
    padding-right: 5px;
    background: #8f9393;
  }
  .panel-tabs {
    height: 26px;
    flex: none;
    display: flex;
    align-items: center;
    gap: 3px;
    padding-left: 3px;
    background: #f2f2f2;
  }
  .panel-input {
    height: 25px;
    flex: none;
    border-bottom: 1px solid #b8b8b8;
  }
  .tree {
    height: 360px;
    flex: none;
    display: flex;
  }
  .tree ul, .props {
    margin: 0;
    padding: 0;
    list-style: none;
  }
  .tree ul { flex: 1; overflow: hidden; }
  li {
    height: 20px;
    line-height: 20px;
    white-space: nowrap;
  }
  li.dot { color: #2a78c8; margin-left: -3px; }
  .scroll {
    width: 17px;
    flex: none;
    background: #e6e6e6;
    display: flex;
    flex-direction: column;
    align-items: center;
  }
  .sbtn {
    width: 17px;
    height: 17px;
    background: #f6f6f6;
    display: flex;
    align-items: center;
    justify-content: center;
  }
  .sbtn.end { margin-top: auto; }
  .thumb {
    width: 17px;
    height: 12px;
    margin-top: 14px;
    background: #f2f2f2;
  }
  .up, .down {
    width: 0;
    height: 0;
    border: 5px solid transparent;
  }
  .up { border-bottom: 6px solid #666; border-top: 0; }
  .down { border-top: 6px solid #666; border-bottom: 0; }
  .props {
    margin-top: 23px;
    border-top: 1px solid #ccc;
    flex: 1;
  }
  .props li { margin-left: -6px; }
  .props li.bold { font-weight: 700; margin-left: 0; }

  .splitter {
    width: 6px;
    flex: none;
    background: #e9e9e9;
  }

  /* ---- viewport ---- */
  .main {
    flex: 1;
    display: flex;
    flex-direction: column;
    min-width: 0;
  }
  .viewport {
    flex: 1;
    position: relative;
    background: #b0b0b0;
    display: flex;
    justify-content: center;
    align-items: flex-start;
  }
  .viewbar {
    display: flex;
    align-items: center;
    height: 28px;
    width: 560px;
    box-sizing: border-box;
    margin-left: 94px;
    padding-left: 3px;
    background: #d4d7d7;
    border: 1px solid #7e8284;
    border-top: 0;
  }
  .viewbar .tool { width: 26px; height: 26px; }
  .viewbar .tsep { margin: 0 3px; }
  .tool {
    flex: none;
    width: 26px;
    height: 24px;
    display: flex;
    align-items: center;
    justify-content: center;
  }
  .viewbar .tool.on { background: #e0a4a4; }
  .bottombar .tool.on { background: linear-gradient(90deg, transparent 1px, #d6a6a6 1px, #d6a6a6 25px, transparent 25px); }
  .tcaret {
    flex: none;
    width: 0;
    height: 0;
    margin: 8px 3px 0;
    border: 3px solid transparent;
    border-top: 3px solid #666;
    border-bottom: 0;
  }
  .tsep {
    flex: none;
    width: 1px;
    height: 22px;
    margin: 0 4px;
    background: #c4c6c6;
  }
  .tdots {
    flex: none;
    width: 0;
    height: 24px;
    margin: 0 3px 0 6px;
    border-left: 2px dotted #b4b4b4;
  }
  .combo + .tdots { margin: 0 6px 0 7px; }

  .cursor {
    position: absolute;
    left: 10px;
    top: 157px;
  }
  .part {
    position: absolute;
    left: 460px;
    top: 102px;
  }
  .part * { vector-effect: non-scaling-stroke; }
  .blue { fill: #4f79ad; stroke: #14191f; stroke-width: 1.500; }
  .gray { fill: #6f7378; stroke: #14191f; stroke-width: 1; }
  .inner { fill: #6f7378; stroke: #14191f; stroke-width: 1.200; }
  .patch { fill: #4f79ad; stroke: none; }
  .housing { fill: #6f7378; stroke: #14191f; stroke-width: 2; }
  .pod { stroke: #1c2733; stroke-width: .8; stroke-linejoin: round; }
  .triad {
    position: absolute;
    left: 0;
    bottom: 5px;
  }
  .ax { font: 10px "Liberation Sans", sans-serif; }
  .scale { font: 9.500px "Liberation Mono", monospace; }

  .viewtabs {
    height: 25px;
    flex: none;
    display: flex;
    align-items: center;
    background: #f0f0f0;
    border-top: 1px solid #fff;
    box-sizing: border-box;
  }
  .backarrow {
    width: 0;
    height: 0;
    margin: 2px 5px 0 3px;
    border: 4px solid transparent;
    border-right: 5px solid #888;
    border-left: 0;
  }
  .vt {
    height: 24px;
    line-height: 24px;
    text-align: center;
    color: #222;
    box-sizing: border-box;
  }
  .blue-tab {
    width: 76px;
    margin-left: 4px;
    padding-right: 6px;
    background: #dbe8f6;
    clip-path: polygon(0 0, 100% 0, 93% 100%, 10% 100%);
  }
  .yellow-tab {
    width: 54px;
    margin-left: -6px;
    padding-right: 12px;
    background: #fbeb85;
    clip-path: polygon(10% 0, 100% 0, 78% 100%, 0 100%);
  }

  /* ---- bottom ---- */
  .bottombar {
    height: 30px;
    flex: none;
    display: flex;
    align-items: center;
    background: #f0f0f0;
    border-bottom: 1px solid #ddd;
    box-sizing: border-box;
  }
  .combo {
    width: 37px;
    height: 24px;
    flex: none;
    display: flex;
    align-items: center;
    justify-content: space-between;
    padding-right: 5px;
    box-sizing: border-box;
    background: #f6f6f6;
    border: 1px solid #d4d4d4;
    border-left: 0;
    color: #777;
    font-size: 11px;
    overflow: hidden;
  }
  .combo i {
    width: 0;
    height: 0;
    border: 3px solid transparent;
    border-top: 3px solid #aaa;
    border-bottom: 0;
  }
  .status {
    height: 23px;
    flex: none;
    display: flex;
    justify-content: flex-end;
    align-items: center;
    background: #8e9393;
  }
  .clock-box {
    width: 56px;
    height: 18px;
    box-sizing: border-box;
    padding-left: 10px;
    border: 1px solid #a0a5a5;
    border-right: 0;
    color: #e8e8e8;
    font: 11px/17px "Liberation Mono", monospace;
    white-space: nowrap;
    overflow: hidden;
  }

  .taskbar {
    height: 40px;
    flex: none;
    display: flex;
    background: linear-gradient(90deg, #f6f1ea 17%, #ece6da 40%, #e6dad4 60%, #eadfe6 78%, #e6e2ee 100%);
  }
  .search {
    width: 299px;
    flex: none;
    margin-left: -3px;
    background: #fff;
    font-size: 13.500px;
    line-height: 38px;
    color: #333;
    border-bottom: 1px solid #ccc;
    box-sizing: border-box;
    white-space: nowrap;
  }
  .apps {
    display: flex;
    padding-left: 2px;
  }
  .app-btn {
    width: 49px;
    height: 40px;
    box-sizing: border-box;
    display: flex;
    align-items: center;
    justify-content: center;
    background: linear-gradient(#1a78b8, #1a78b8) no-repeat 5px 100% / 40px 2px;
  }
  .app-btn.white {
    background: linear-gradient(#1a78b8, #1a78b8) no-repeat 0 100% / 100% 2px, #f7f7f7;
  }
  .tray {
    margin-left: auto;
    display: flex;
    align-items: center;
    width: 362px;
    flex: none;
    padding-left: 8px;
    box-sizing: border-box;
  }
  .tray-i {
    width: 24px;
    flex: none;
    display: flex;
    justify-content: center;
  }
  .ime {
    flex: none;
    width: 16px;
    margin-left: 5px;
    font-size: 14px;
    color: #111;
    text-align: center;
    line-height: 16px;
  }
  .ime.box {
    margin-left: 13px;
    width: 15px;
    font-size: 12px;
    border: 1px solid #444;
    background: #f4f0f4;
  }
  .clock {
    margin-left: 20px;
    display: flex;
    flex-direction: column;
    align-items: center;
    white-space: nowrap;
    gap: 2px;
    line-height: 17px;
    color: #222;
  }
</style>
